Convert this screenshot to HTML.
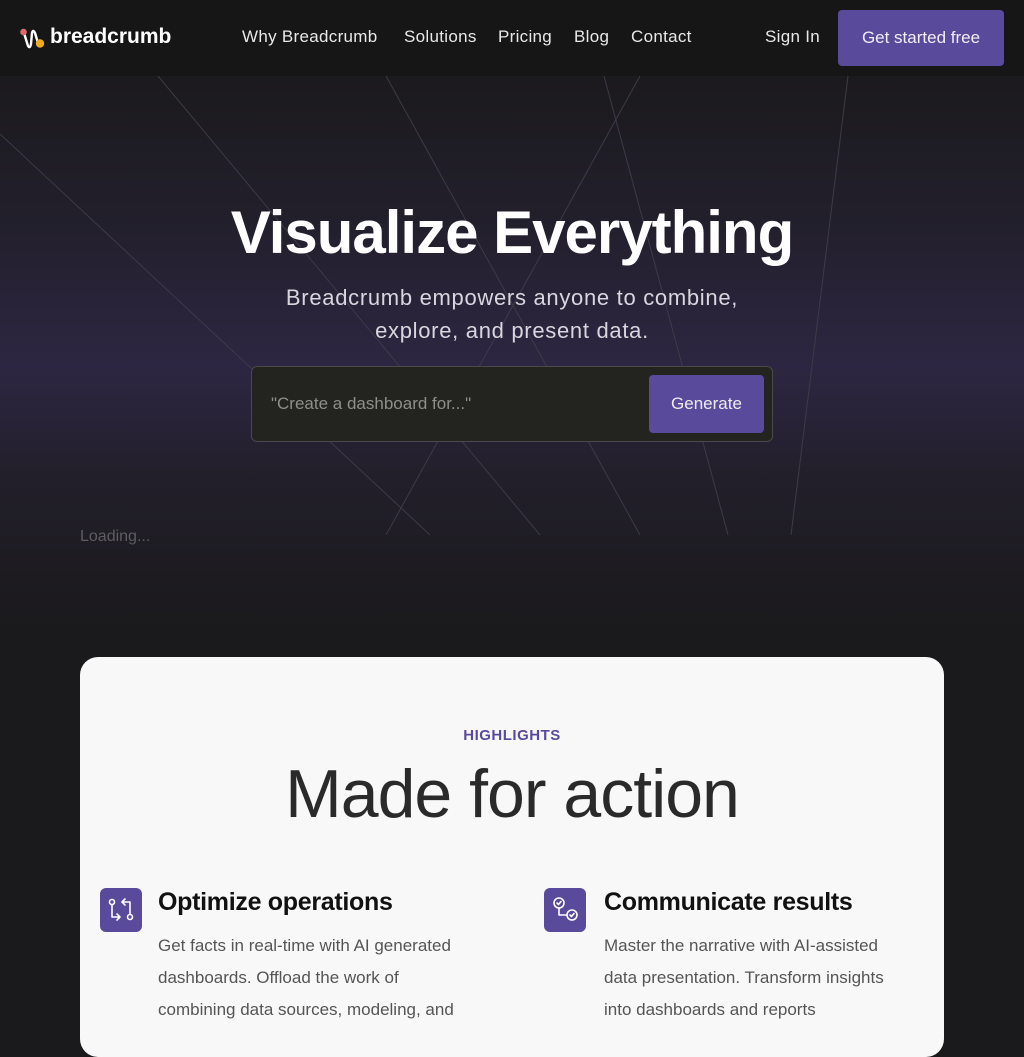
<!DOCTYPE html>
<html><head><meta charset="utf-8"><style>
*{margin:0;padding:0;box-sizing:border-box}
body{width:1024px;height:1024px;overflow:hidden;font-family:"Liberation Sans",sans-serif;background:#1a191b;position:relative}
.hdr{position:absolute;top:0;left:0;width:1024px;height:76px;background:#161616}
.hero{position:absolute;top:76px;left:0;width:1024px;height:560px;background:linear-gradient(#1b1a1d 0%,#221f2b 25%,#2d2642 52%,#221f2a 72%,#1a191b 100%)}
.nav a{position:absolute;top:27px;color:#e8e8e8;font-size:17px;text-decoration:none;letter-spacing:.3px}
.btn{position:absolute;left:838px;top:10px;width:166px;height:56px;background:#5a4a9c;border-radius:4px;color:#f0eef8;font-size:17px;text-align:center;line-height:56px}
h1{position:absolute;top:198px;width:1024px;text-align:center;color:#fff;font-size:60px;font-weight:bold;letter-spacing:-1px}
.sub{position:absolute;top:281px;width:1024px;text-align:center;color:#d8d6de;font-size:22px;line-height:33px;letter-spacing:.7px}
.inp{position:absolute;left:251px;top:366px;width:522px;height:76px;background:#232320;border:1px solid #4a4a48;border-radius:6px}
.inp span{position:absolute;left:19px;top:27px;color:#8e8e8a;font-size:17px}
.gen{position:absolute;left:397px;top:8px;width:115px;height:58px;background:#5a4a9c;border-radius:4px;color:#eee;font-size:17px;text-align:center;line-height:58px}
.card{position:absolute;left:80px;top:657px;width:864px;height:400px;background:#f8f8f8;border-radius:18px}
.hl{position:absolute;top:70px;width:864px;text-align:center;color:#5a4a9c;font-size:15px;font-weight:bold;letter-spacing:.5px}
.mfa{position:absolute;top:98px;width:864px;text-align:center;color:#2a2a2a;font-size:68px;letter-spacing:-1px}
.ic{position:absolute;width:42px;height:44px;background:#5a4a9c;border-radius:6px}
.ft{position:absolute;font-size:25px;font-weight:bold;color:#111;letter-spacing:-0.3px}
.fd{position:absolute;font-size:17px;color:#555;line-height:32px}
</style></head><body>
<div class="hdr"></div>
<div class="hero"></div>
<svg style="position:absolute;left:0;top:76px" width="1024" height="460">
<g stroke="#3e3a48" stroke-width="1" fill="none">
<line x1="0" y1="58" x2="430" y2="459"/>
<line x1="158" y1="0" x2="540" y2="459"/>
<line x1="386" y1="0" x2="640" y2="459"/>
<line x1="604" y1="0" x2="728" y2="459"/>
<line x1="640" y1="0" x2="386" y2="459"/>
<line x1="848" y1="0" x2="791" y2="459"/>
</g></svg>
<svg style="position:absolute;left:19px;top:27px" width="28" height="22" viewBox="0 0 28 22">
<path d="M5 6 L9 19 Q11 22 12 17 L13 6 Q14 2 16 6 L19 16" stroke="#fff" stroke-width="2.4" fill="none" stroke-linecap="round"/>
<circle cx="4.5" cy="5" r="3.3" fill="#e06a6a"/><circle cx="21" cy="16.5" r="4.2" fill="#f4a81c"/></svg>
<div style="position:absolute;left:50px;top:25px;color:#fff;font-size:21px;font-weight:bold">breadcrumb</div>
<div class="nav"><a style="left:242px">Why Breadcrumb</a><a style="left:404px">Solutions</a><a style="left:498px">Pricing</a><a style="left:574px">Blog</a><a style="left:631px">Contact</a><a style="left:765px">Sign In</a></div>
<div class="btn">Get started free</div>
<h1>Visualize Everything</h1>
<div class="sub">Breadcrumb empowers anyone to combine,<br>explore, and present data.</div>
<div class="inp"><span>"Create a dashboard for..."</span><div class="gen">Generate</div></div>
<div style="position:absolute;left:80px;top:528px;color:#5e5d62;font-size:16px">Loading...</div>
<div class="card">
<div class="hl">HIGHLIGHTS</div>
<div class="mfa">Made for action</div>
<div class="ic" style="left:20px;top:231px"><svg width="42" height="44" viewBox="0 0 42 44" fill="none" stroke="#fff" stroke-width="1.6" stroke-linecap="round" stroke-linejoin="round"><circle cx="12" cy="14" r="2.5"/><path d="M12 17v12h7M17 26l3 3-3 3"/><circle cx="30" cy="29" r="2.5"/><path d="M30 26V14h-7M25 11l-3 3 3 3"/></svg></div>
<div class="ft" style="left:78px;top:231px">Optimize operations</div>
<div class="fd" style="left:78px;top:273px">Get facts in real-time with AI generated<br>dashboards. Offload the work of<br>combining data sources, modeling, and</div>
<div class="ic" style="left:464px;top:231px"><svg width="44" height="44" viewBox="0 0 44 44" fill="none" stroke="#fff" stroke-width="1.6" stroke-linecap="round" stroke-linejoin="round"><circle cx="15" cy="15" r="5"/><path d="M13 15l1.5 1.5L17 13.5"/><path d="M15 20v7h8"/><circle cx="28" cy="27" r="5"/><path d="M26 27l1.5 1.5 2.5-3"/></svg></div>
<div class="ft" style="left:524px;top:231px">Communicate results</div>
<div class="fd" style="left:524px;top:273px">Master the narrative with AI-assisted<br>data presentation. Transform insights<br>into dashboards and reports</div>
</div>
</body></html>
